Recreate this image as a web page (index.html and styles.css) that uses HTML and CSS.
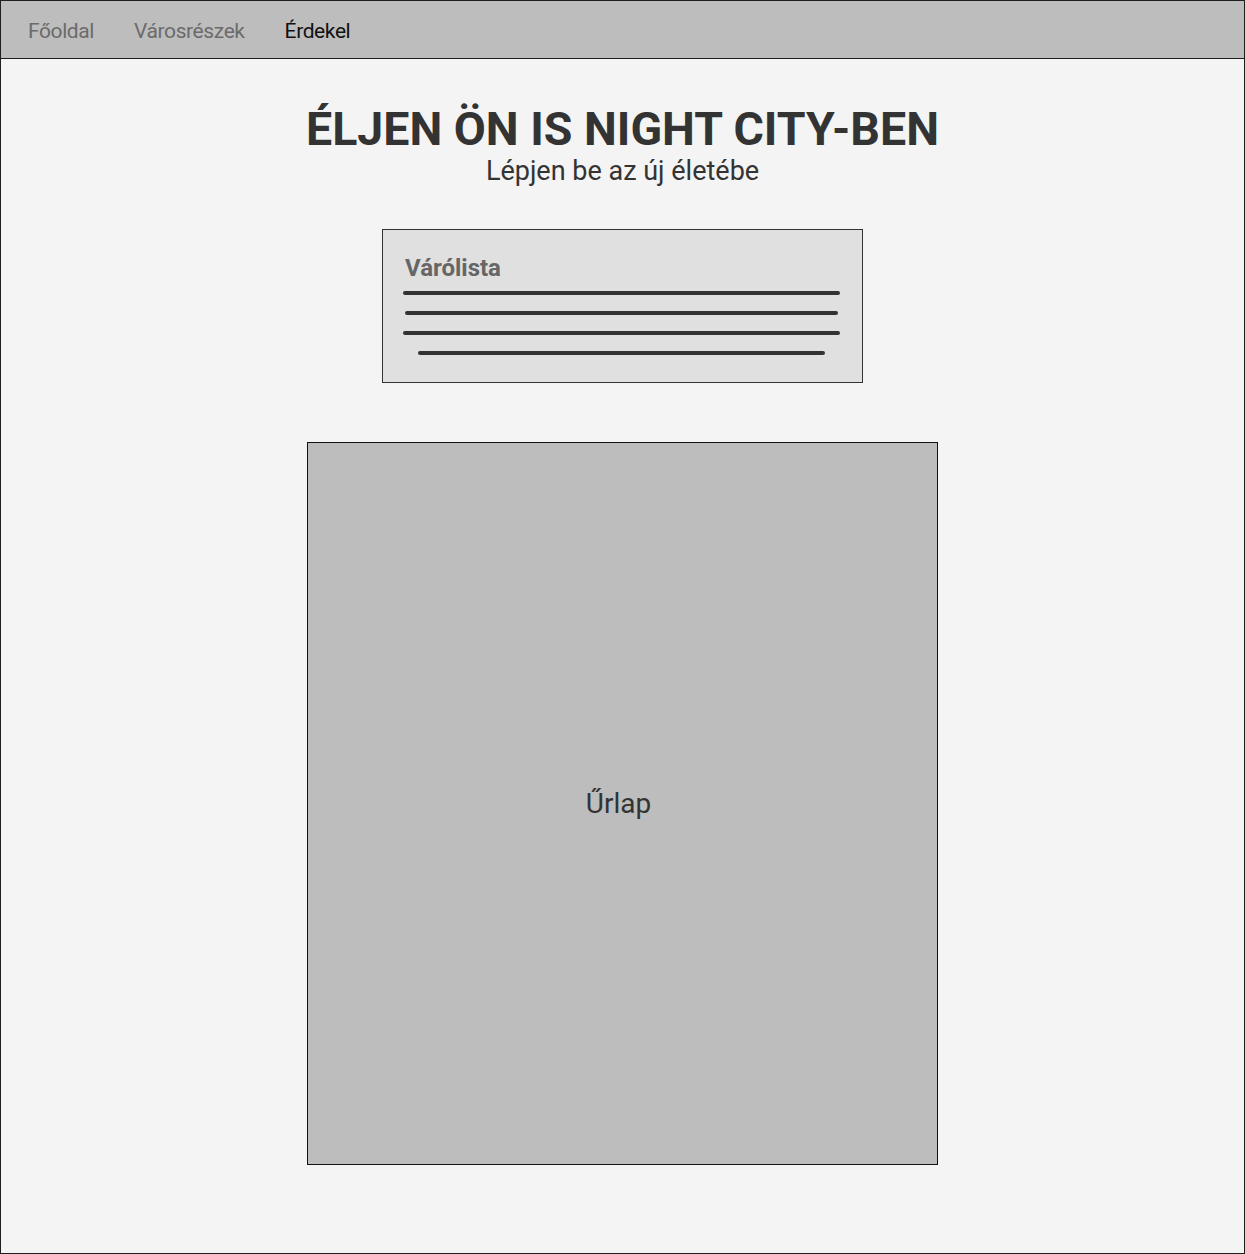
FILE: index.html
```html
<!DOCTYPE html>
<html lang="hu">
<head>
<meta charset="utf-8">
<title>Night City</title>
<link rel="stylesheet" href="styles.css">
</head>
<body>
<div class="page">
  <nav class="nav">
    <a class="nav-link">Főoldal</a>
    <a class="nav-link">Városrészek</a>
    <a class="nav-link active">Érdekel</a>
  </nav>
  <main class="main">
    <header class="hero">
      <h1 class="hero-title">ÉLJEN ÖN IS NIGHT CITY-BEN</h1>
      <p class="hero-sub">Lépjen be az új életébe</p>
    </header>
    <section class="waitlist">
      <h2 class="waitlist-title">Várólista</h2>
      <div class="lines">
        <div class="line line-a"></div>
        <div class="line line-b"></div>
        <div class="line line-a"></div>
        <div class="line line-c"></div>
      </div>
    </section>
    <section class="form-box">
      <span class="form-label">Űrlap</span>
    </section>
  </main>
</div>
</body>
</html>
```

FILE: styles.css
```css
* { box-sizing: border-box; }
html, body { margin: 0; padding: 0; }
body {
  font-family: Roboto, "Open Sans", sans-serif;
  background: #f4f4f4;
}
.page {
  width: 1245px;
  height: 1254px;
  border: 1px solid #1e1e1e;
  background: #f4f4f4;
  display: flex;
  flex-direction: column;
}
.nav {
  height: 58px;
  background: #bdbdbd;
  border-bottom: 1px solid #1e1e1e;
  display: flex;
  align-items: center;
  gap: 40px;
  padding: 2px 0 0 27px;
}
.nav-link {
  font-size: 21px;
  letter-spacing: -0.4px;
  color: #6b6b6b;
}
.nav-link.active { color: #111; }
.main {
  display: flex;
  flex-direction: column;
  align-items: center;
}
.hero {
  text-align: center;
  margin-top: 40px;
}
.hero-title {
  margin: 0;
  font-size: 46.5px;
  line-height: 60px;
  font-weight: 700;
  color: #333;
}
.hero-sub {
  margin: -3px 0 0;
  font-size: 27px;
  line-height: 30px;
  color: #333;
}
.waitlist {
  margin-top: 43px;
  width: 481px;
  height: 154px;
  background: #e0e0e0;
  border: 1px solid #333;
  padding: 24px 22px 0 20px;
}
.waitlist-title {
  margin: 0 0 0 2px;
  font-size: 24px;
  line-height: 28px;
  font-weight: 700;
  color: #666;
}
.lines {
  margin-top: 9px;
  display: flex;
  flex-direction: column;
  gap: 16px;
  align-items: flex-start;
}
.line {
  height: 4px;
  background: #333;
  border-radius: 2px;
}
.line-a { width: 437px; }
.line-b { width: 433px; margin-left: 2px; }
.line-c { width: 407px; margin-left: 15px; }
.form-box {
  margin-top: 59px;
  width: 631px;
  height: 723px;
  background: #bdbdbd;
  border: 1px solid #111;
  display: flex;
  align-items: center;
  justify-content: center;
}
.form-label {
  font-size: 28px;
  color: #333;
  margin-left: -8px;
}
```
